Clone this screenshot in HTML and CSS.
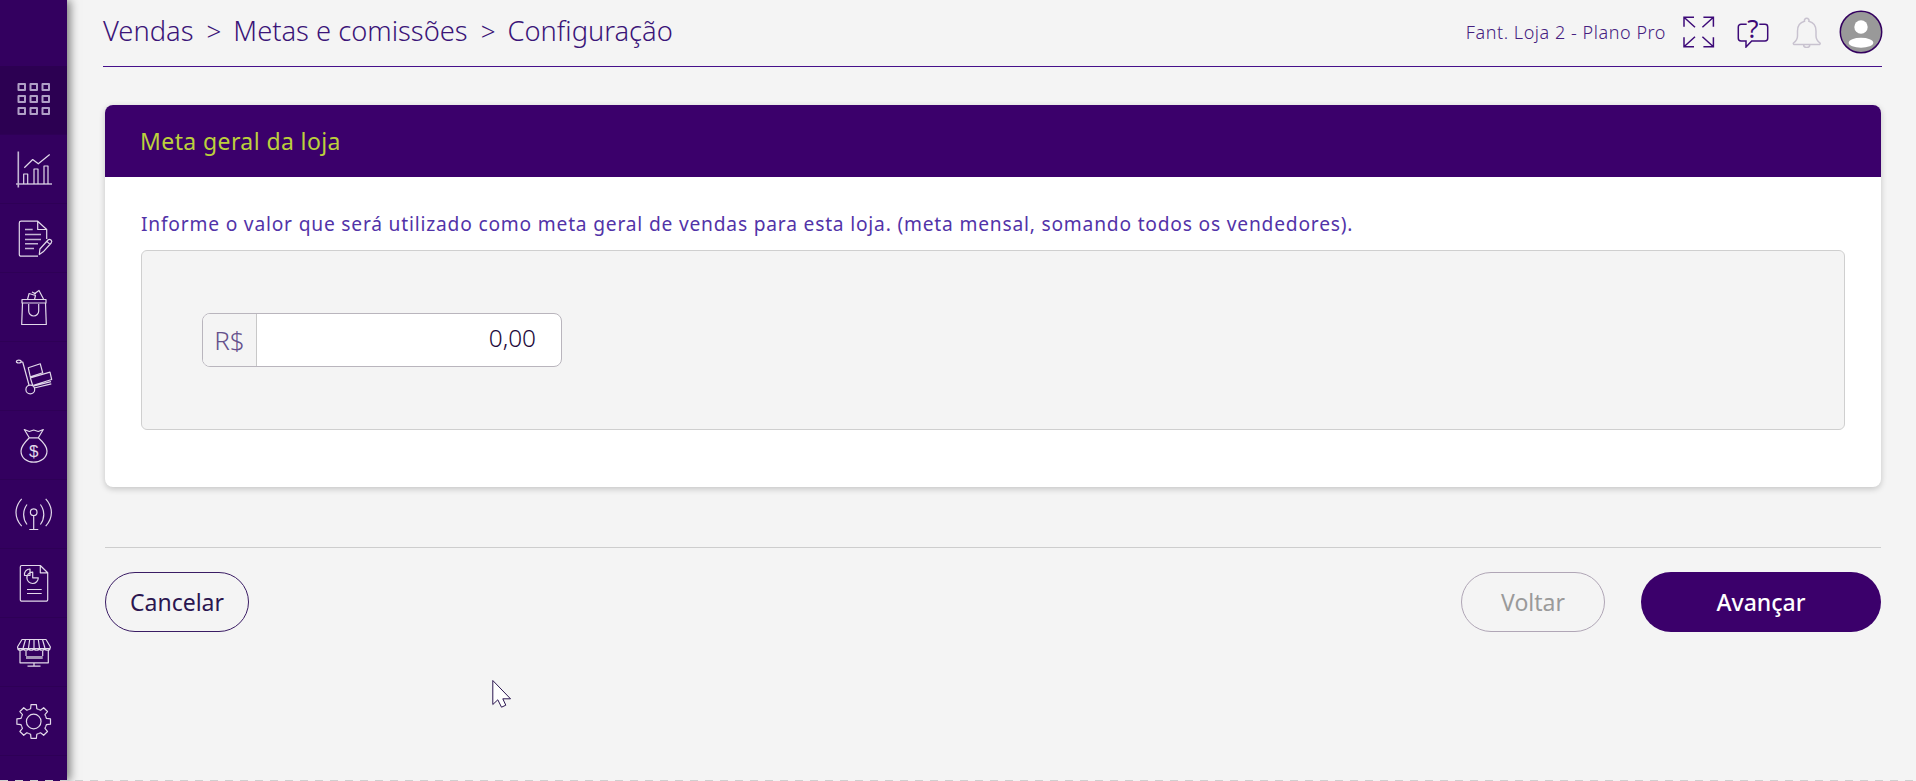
FILE: index.html
```html
<!DOCTYPE html>
<html lang="pt-BR">
<head>
<meta charset="utf-8">
<title>Meta geral da loja</title>
<link rel="stylesheet" href="styles.css">
</head>
<body>
<div class="app">
  <nav class="sidebar">
    <div class="side-top"></div>
    <a class="side-item active">
      <svg class="side-icon dim" viewBox="0 0 48 48"><rect x="8.5" y="8" width="6.5" height="6"/><rect x="20.5" y="8" width="6.5" height="6"/><rect x="32.5" y="8" width="6.5" height="6"/><rect x="8.5" y="20" width="6.5" height="6"/><rect x="20.5" y="20" width="6.5" height="6"/><rect x="32.5" y="20" width="6.5" height="6"/><rect x="8.5" y="32" width="6.5" height="6"/><rect x="20.5" y="32" width="6.5" height="6"/><rect x="32.5" y="32" width="6.5" height="6"/></svg>
    </a>
    <a class="side-item">
      <svg class="side-icon" viewBox="0 0 48 48"><path class="dimline" d="M8.3 6.5V42.5M6 39H42"/><path d="M13.7 39V29h4v10M24 39V24h4v15M34 39V21h4v18M14.3 22.8l8.4-8.3 5.6 4.3 11.4-9.3"/></svg>
    </a>
    <a class="side-item">
      <svg class="side-icon" viewBox="0 0 48 48"><path d="M28 42.2H11a1.700 1.700 0 0 1-1.700-1.700V9a1.800 1.800 0 0 1 1.800-1.800h16.600l9 8.300v9.500M27.700 7.200v8.300h9"/><path class="dimline" d="M15 15.500h7.700M15 20.500h16M15 25.500h16M15 29.800h13M15 34.500h9"/><path d="M29.300 40.500l.6-5.500 8.100-9a2.200 2.200 0 0 1 3.200 3l-8 8.800zM36.800 27.400l3.300 3"/></svg>
    </a>
    <a class="side-item">
      <svg class="side-icon" viewBox="0 0 48 48"><path d="M12 17v-.5h24V20H12zM12.500 20l-.8 21.500H36.300L35.500 20M18.700 21v7a5 5 0 0 0 10 0v-7M17.500 16.500l1.600-6 6.400 2-1 4M24 11l5-3.500 4.500 8.500M22 9l4 2"/></svg>
    </a>
    <a class="side-item">
      <svg class="side-icon" viewBox="0 0 48 48"><ellipse cx="8.800" cy="9.600" rx="2.400" ry="1.400"/><path d="M11 10h1.700l6.300 23"/><circle cx="20.300" cy="37.500" r="4.400"/><path d="M24.300 36l17-4.200M24 33.800l17-4.200M18.300 15.800l12-4 2.400 9-12.400 4zM20.300 25.800L40 20.200l1.700 7.300-19 6z"/></svg>
    </a>
    <a class="side-item">
      <svg class="side-icon" viewBox="0 0 48 48"><path d="M19.300 16.800C15 21 11 25 11 30c0 7 6 11.200 12.700 11.200S37 37 37 30c0-5-4-9-8.700-13.200M19.300 16.800h9M19.300 16.800L14.300 8.500l5 2 4.400-1.500 4.600 1.500 5-2-5 8.300"/><text class="icon-glyph" x="23.700" y="36" text-anchor="middle">$</text></svg>
    </a>
    <a class="side-item">
      <svg class="side-icon" viewBox="0 0 48 48"><circle cx="23.700" cy="22.200" r="3.300"/><path d="M23.700 25.500v14M19.300 39.500h9M17 14.500c-4.500 6-4.500 14 0 20M30.400 14.500c4.500 6 4.500 14 0 20M11.700 8.800c-7.600 8.400-7.600 19 0 27.400M35.700 8.800c7.600 8.400 7.600 19 0 27.400"/></svg>
    </a>
    <a class="side-item">
      <svg class="side-icon" viewBox="0 0 48 48"><path d="M30.300 6.500H11.800a1.500 1.500 0 0 0-1.500 1.500v32.700a1.500 1.500 0 0 0 1.500 1.500h24.400a1.500 1.500 0 0 0 1.500-1.500V13.800zM30.300 6.500v7.300h7.400"/><path d="M22.700 13.200V18.800h5.600a5.700 5.700 0 1 1-6-5.700zM14.500 16.500a5.500 5.500 0 0 1 5.500-6.500v6.500zM17 30.500h14.700M17 34.500h14.700"/></svg>
    </a>
    <a class="side-item">
      <svg class="side-icon" viewBox="0 0 48 48"><path d="M12 11.500h24l4.300 7.300a1.500 1.500 0 0 1-1.400 1.900H9a1.500 1.500 0 0 1-1.400-1.900zM7.700 20c0 3 5.400 3 5.400 0 0 3 5.400 3 5.400 0 0 3 5.400 3 5.400 0 0 3 5.400 3 5.400 0 0 3 5.400 3 5.400 0 0 3 5.400 3 5.400 0M15.500 11.500l-2.400 8.500M19.700 11.500l-1.200 8.500M24 11.500v8.500M28.300 11.500l1.200 8.500M32.500 11.500l2.400 8.500M10 22.500V34.800h28.300V22.500M24 34.800V38M17.500 38.200h13"/><path class="dimfill" d="M16 28h16.700v3H16z"/><path d="M16 23v5M32.700 23v5"/></svg>
    </a>
    <a class="side-item">
      <svg class="side-icon" viewBox="0 0 48 48"><circle cx="23.700" cy="24.500" r="7.300"/><g transform="translate(23.700 24.500)"><path id="tooth" d="M12-5 12.800-3.100 16.800-2.700 16.800 2.700 12.800 3.100 12 5"/><use href="#tooth" transform="rotate(45)"/><use href="#tooth" transform="rotate(90)"/><use href="#tooth" transform="rotate(135)"/><use href="#tooth" transform="rotate(180)"/><use href="#tooth" transform="rotate(225)"/><use href="#tooth" transform="rotate(270)"/><use href="#tooth" transform="rotate(315)"/></g></svg>
    </a>
  </nav>

  <main class="main">
    <header class="topbar">
      <div class="crumbs"><span>Vendas</span><span class="sep">&gt;</span><span>Metas e comissões</span><span class="sep">&gt;</span><span>Configuração</span></div>
      <div class="top-right">
        <span class="store">Fant. Loja 2 - Plano Pro</span>
        <svg class="top-icon" viewBox="0 0 32 32"><path d="M11 1.300H1V10.700M1 1.300L12 11.300M20.400 1.300h10V10.700M30.400 1.300L19.400 11.300M11 30.700H1V21.300M1 30.700L12 20.700M20.400 30.700h10V21.300M30.400 30.700L19.400 20.700"/></svg>
        <span class="help-wrap">
          <svg class="top-icon help" viewBox="0 0 32 32"><path d="M9.700 8.300H4a2.700 2.700 0 0 0-2.700 2.700v11.300A2.700 2.700 0 0 0 4 25h5v6l5.700-6H28a2.700 2.700 0 0 0 2.700-2.700V11A2.700 2.700 0 0 0 28 8.300h-5.700"/></svg>
          <span class="help-glyph">?</span>
        </span>
        <svg class="top-icon bell" viewBox="0 0 32 32"><path d="M15.700 2.300a2.300 2.300 0 0 1 2.200 3C22.500 6.500 25 10 25 15v5c0 3 2 5.500 4 7a1 1 0 0 1-.5 1.500H3a1 1 0 0 1-.5-1.500c2-1.500 4-4 4-7v-5c0-5 2.500-8.500 7-9.700a2.300 2.300 0 0 1 2.200-3zM12.500 28.500a3.200 3 0 0 0 6.400 0"/></svg>
        <svg class="avatar" viewBox="0 0 44 44"><circle class="av-bg" cx="22" cy="22" r="20.700"/><circle class="av-fg" cx="22" cy="17" r="6.700"/><ellipse class="av-fg" cx="22" cy="32.700" rx="12.300" ry="5"/></svg>
      </div>
    </header>

    <section class="card">
      <h2 class="card-head">Meta geral da loja</h2>
      <div class="card-body">
        <p class="hint">Informe o valor que será utilizado como meta geral de vendas para esta loja. (meta mensal, somando todos os vendedores).</p>
        <div class="panel">
          <div class="money">
            <span class="addon">R$</span>
            <span class="value">0,00</span>
          </div>
        </div>
      </div>
    </section>

    <footer class="actions">
      <button class="btn outline">Cancelar</button>
      <div class="actions-right">
        <button class="btn disabled">Voltar</button>
        <button class="btn primary">Avançar</button>
      </div>
    </footer>
  </main>
</div>
<div class="dashes"></div>
<svg class="cursor" viewBox="0 0 20 28"><path d="M.8.500V24.500L5.800 19.800 9.500 27.200 13.800 25.200 10.800 18.800H18.500z"/></svg>
</body>
</html>
```

FILE: styles.css
```css
* { box-sizing: border-box; }
html, body { margin: 0; height: 100%; overflow: hidden; }
body { background: #f4f4f4; font-family: "Noto Sans", "Open Sans", sans-serif; color: #2b1650; }
.app { display: flex; height: 781px; }

.sidebar { width: 67px; flex: none; background: #33005f; box-shadow: 3px 0 9px rgba(0,0,0,.5); position: relative; z-index: 2; }
.side-top { height: 66px; }
.side-item { display: flex; align-items: center; justify-content: center; height: 69px; border-bottom: 1px solid #2e0056; }
.side-item.active { background: #2c0052; }
.side-icon { width: 48px; height: 48px; fill: none; stroke: #e2d9ea; stroke-width: 1.2; stroke-linejoin: round; display: block; }
.side-icon.dim { stroke: #b0a0c6; stroke-width: 2; }
.dimline { stroke: #c3b5d3; stroke-width: 1.6; }
.dimfill { fill: #a596b8; stroke: none; }
.icon-glyph { font: 17px "Liberation Sans", sans-serif; fill: #e2d9ea; stroke: none; }

.main { flex: 1; min-width: 0; padding: 0 34px 0 36px; }
.topbar { height: 67px; border-bottom: 1px solid #45108a; display: flex; align-items: center; justify-content: space-between; padding-bottom: 3px; }
.crumbs { font-size: 27.3px; color: #3b1478; display: flex; align-items: center; font-weight: 300; padding-bottom: 2px; }
.sep { margin: 0 12px 0 13px; font-size: 26px; }
.top-right { display: flex; align-items: center; }
.store { font-size: 18px; letter-spacing: .55px; font-weight: 300; color: #45207f; margin-right: 17px; }
.top-icon { width: 32px; height: 32px; fill: none; stroke: #3d0a78; stroke-width: 1.5; margin-right: 22px; display: block; }
.help-wrap { position: relative; display: block; }
.help-glyph { position: absolute; left: 0; width: 32px; top: -3px; text-align: center; font-size: 26px; line-height: 30px; font-weight: 400; color: #3d0a78; }
.bell { stroke: #c8c2cf; margin-right: 16px; }
.avatar { width: 44px; height: 44px; display: block; margin-right: -1px; }
.av-bg { fill: #999; stroke: #33005f; stroke-width: 1.5; }
.av-fg { fill: #fff; }

.card { margin: 38px 1px 0 2px; background: #fff; border-radius: 8px; box-shadow: 0 2px 6px rgba(0,0,0,.2); overflow: hidden; }
.card-head { margin: 0; height: 72px; background: #3b006b; color: #bcd03c; font-size: 23px; letter-spacing: .4px; font-weight: 400; display: flex; align-items: center; padding-left: 35px; }
.card-body { padding: 36px 36px 57px 36px; }
.hint { margin: 0 0 15px; font-size: 19.2px; letter-spacing: .8px; font-weight: 400; line-height: 22px; color: #5233a8; white-space: nowrap; }
.panel { height: 180px; background: #f4f4f4; border: 1px solid #cfcfcf; border-radius: 6px; padding: 62px 0 0 60px; }
.money { width: 360px; height: 54px; border: 1px solid #b9b5bd; border-radius: 8px; background: #fff; display: flex; overflow: hidden; }
.addon { width: 54px; background: #f4f4f4; border-right: 1px solid #c8c8c8; color: #65508c; font-size: 26px; font-weight: 300; display: flex; align-items: center; justify-content: center; }
.value { flex: 1; text-align: right; font-size: 24.4px; font-weight: 300; line-height: 48px; padding-right: 25px; color: #1e0a3c; }

.actions { margin: 60px 1px 0 2px; padding-top: 24px; border-top: 1px solid #cdcdcd; display: flex; justify-content: space-between; }
.actions-right { display: flex; gap: 36px; }
.btn { height: 60px; width: 144px; border-radius: 30px; font: 400 23px "Noto Sans", sans-serif; background: transparent; padding: 0; }
.btn.outline { border: 1px solid #3a1c64; color: #2b1650; }
.btn.disabled { border: 1px solid #b0a6b6; color: #9a9a9a; }
.btn.primary { width: 240px; border: 0; background: #3b006b; color: #fff; font-weight: 500; }

.dashes { position: absolute; left: 0; right: 0; top: 780px; height: 1px; z-index: 3; background: repeating-linear-gradient(90deg, #cfcfcf 0 8px, transparent 8px 15px); }
.cursor { position: absolute; left: 492px; top: 680px; width: 20px; height: 28px; fill: #fff; stroke: #2b1650; stroke-width: 1; z-index: 4; }
```
